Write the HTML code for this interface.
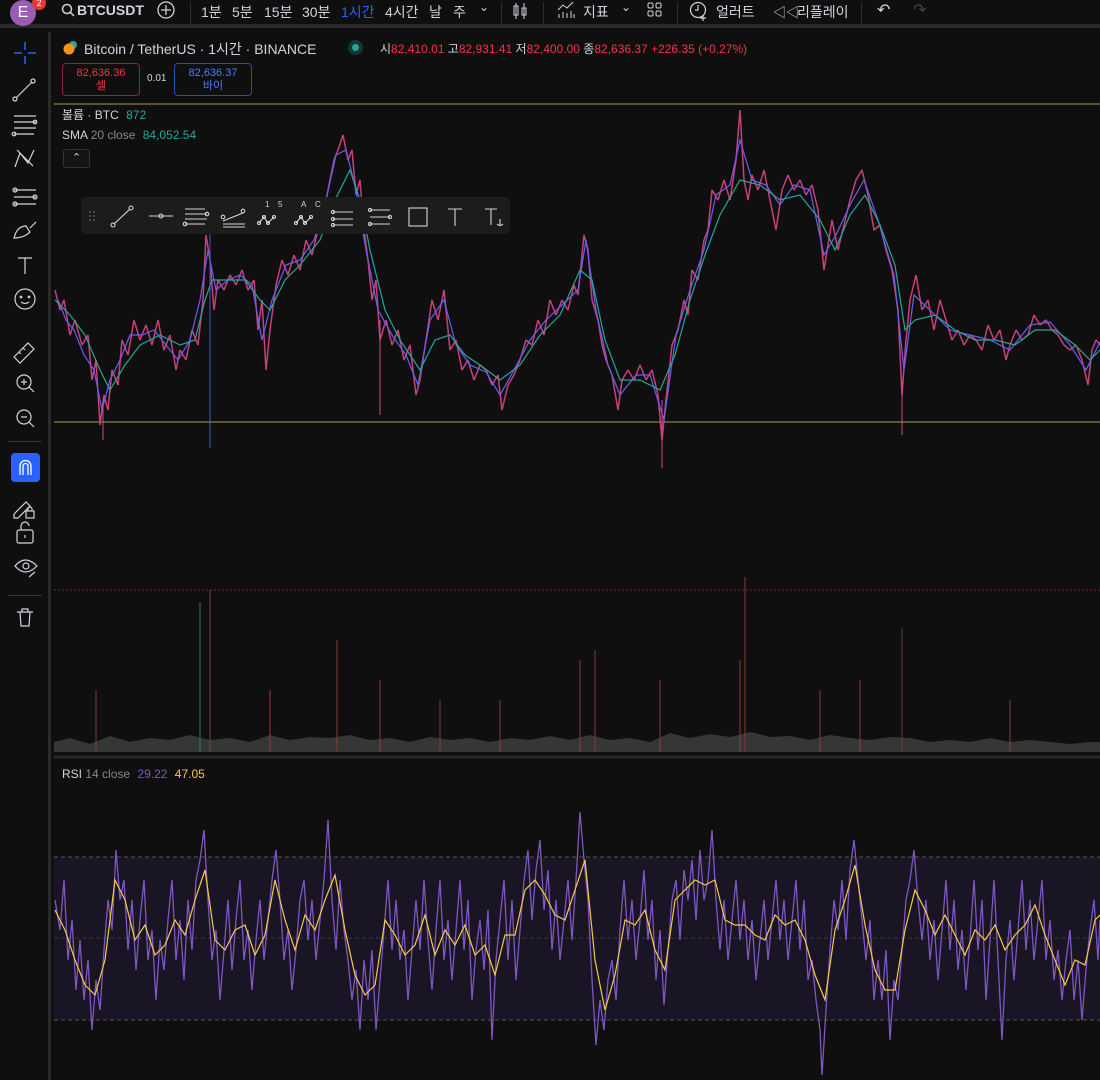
<!DOCTYPE html>
<html><head><meta charset="utf-8">
<style>
*{margin:0;padding:0;box-sizing:border-box}
body{width:1100px;height:1080px;background:#0f0f0f;overflow:hidden;font-family:"Liberation Sans","Noto Sans CJK KR",sans-serif;color:#d1d4dc;position:relative}
.top{position:absolute;left:0;top:0;width:1100px;height:28px;background:#0f0f0f;border-bottom:4px solid #2a2a2a}
.t{position:absolute;top:6px;font-size:14px;color:#d1d4dc;white-space:nowrap}
.sep{position:absolute;top:2px;width:1px;height:22px;background:#2f2f2f}
.side{position:absolute;left:0;top:32px;width:51px;height:1048px;background:#0f0f0f;border-right:3px solid #2a2a2a}
.hl{position:absolute;left:8px;width:34px;height:1px;background:#3a3a3a}
.lbl{position:absolute;font-size:12px;white-space:nowrap}
</style></head><body>
<div class="top">
  <div style="position:absolute;left:10px;top:0;width:26px;height:26px;border-radius:50%;background:#9b5cb4;color:#fff;font-size:16px;text-align:center;line-height:26px">E</div>
  <div style="position:absolute;left:32px;top:-4px;width:14px;height:14px;border-radius:50%;background:#e53935;color:#fff;font-size:9px;text-align:center;line-height:14px">2</div>
  <svg style="position:absolute;left:61px;top:3px" width="14" height="14"><circle cx="6" cy="6" r="4.5" stroke="#d1d4dc" stroke-width="1.5" fill="none"/><path d="M9.5 9.5L13 13" stroke="#d1d4dc" stroke-width="1.5"/></svg>
  <div class="t" style="left:77px;top:2px;font-weight:bold;font-size:14px">BTCUSDT</div>
  <svg style="position:absolute;left:156px;top:0" width="20" height="20"><circle cx="10" cy="10" r="8" stroke="#d1d4dc" stroke-width="1.3" fill="none"/><path d="M10 5v10M5 10h10" stroke="#d1d4dc" stroke-width="1.3"/></svg>
  <div class="sep" style="left:190px"></div>
  <div class="t" style="left:201px;top:2px">1분</div>
  <div class="t" style="left:232px;top:2px">5분</div>
  <div class="t" style="left:264px;top:2px">15분</div>
  <div class="t" style="left:302px;top:2px">30분</div>
  <div class="t" style="left:341px;top:2px;color:#2962ff">1시간</div>
  <div class="t" style="left:385px;top:2px">4시간</div>
  <div class="t" style="left:429px;top:2px">날</div>
  <div class="t" style="left:453px;top:2px">주</div>
  <div class="t" style="left:479px;top:0;font-size:12px">⌄</div>
  <div class="sep" style="left:501px"></div>
  <svg style="position:absolute;left:511px;top:1px" width="18" height="20"><path d="M5 2v16M13 2v16" stroke="#d1d4dc"/><rect x="3" y="5" width="4" height="9" fill="none" stroke="#d1d4dc"/><rect x="11" y="7" width="4" height="7" fill="none" stroke="#d1d4dc"/></svg>
  <div class="sep" style="left:543px"></div>
  <svg style="position:absolute;left:557px;top:0" width="20" height="20"><path d="M1 10l5-5 4 3 6-6M2 18v-4M6 18v-6M10 18v-5M14 18v-7M17 18v-4" stroke="#d1d4dc" fill="none"/></svg>
  <div class="t" style="left:583px;top:2px">지표</div>
  <div class="t" style="left:621px;top:0;font-size:12px">⌄</div>
  <svg style="position:absolute;left:646px;top:1px" width="18" height="18"><rect x="2" y="2" width="5" height="5" rx="1.5" fill="none" stroke="#d1d4dc"/><rect x="10" y="2" width="5" height="5" rx="1.5" fill="none" stroke="#d1d4dc"/><rect x="2" y="10" width="5" height="5" rx="1.5" fill="none" stroke="#d1d4dc"/><rect x="10" y="10" width="5" height="5" rx="1.5" fill="none" stroke="#d1d4dc"/></svg>
  <div class="sep" style="left:677px"></div>
  <svg style="position:absolute;left:688px;top:0" width="22" height="22"><circle cx="10" cy="10" r="7.5" fill="none" stroke="#d1d4dc" stroke-width="1.2"/><path d="M10 5v5h-3M15 15v6M12 18h6" stroke="#d1d4dc" stroke-width="1.2"/></svg>
  <div class="t" style="left:716px;top:2px">얼러트</div>
  <div class="t" style="left:773px;top:2px;font-size:13px">◁◁</div>
  <div class="t" style="left:797px;top:2px">리플레이</div>
  <div class="sep" style="left:861px"></div>
  <div class="t" style="left:877px;top:0;font-size:16px">↶</div>
  <div class="t" style="left:913px;top:0;font-size:16px;color:#444">↷</div>
</div>

<div class="side">
  <svg width="51" height="620" style="position:absolute;left:0;top:0" stroke="#d1d4dc" fill="none" stroke-width="1.2">
    <path d="M25 10v8M25 24v8M14 21h8M28 21h8" stroke="#2962ff" stroke-width="1.5"/>
    <path d="M16 66L32 50"/><circle cx="15" cy="67" r="2"/><circle cx="33" cy="49" r="2"/>
    <path d="M14 84h22M14 90h22M14 96h22M14 102h20"/><circle cx="14" cy="102" r="1.8"/><circle cx="35" cy="90" r="1.8"/>
    <path d="M15 135l5-14 8 10 6-13M17 118l16 16"/>
    <path d="M14 158h22M14 165h22M14 172h22"/><circle cx="15" cy="158" r="2"/><circle cx="35" cy="165" r="2"/><circle cx="15" cy="172" r="2"/>
    <path d="M14 206c2-8 6-12 12-12l4 6c-4 4-10 6-16 6zM30 196l6-6"/>
    <path d="M18 226h14M25 226v16"/>
    <circle cx="25" cy="267" r="10"/><circle cx="21" cy="265" r="0.8"/><circle cx="29" cy="265" r="0.8"/><path d="M21 270q4 3 8 0"/>
    <path d="M14 325l14-14 6 6-14 14zM19 320l2 2M23 316l2 2"/>
    <circle cx="24" cy="350" r="7"/><path d="M29 355l5 5M21 350h6M24 347v6"/>
    <circle cx="24" cy="385" r="7"/><path d="M29 390l5 5M21 385h6"/>
    <path d="M14 482l12-12 4 4-12 12h-4z"/><rect x="26" y="479" width="8" height="7"/><path d="M28 479v-2a2 2 0 0 1 4 0v2"/>
    <rect x="17" y="498" width="16" height="13" rx="2"/><path d="M21 498v-4a4 4 0 0 1 8 0"/><path d="M25 503v3"/>
    <path d="M15 534q10-12 22 0q-12 12-22 0z"/><circle cx="26" cy="534" r="3"/><path d="M29 545l6-5"/>
    <path d="M17 580h16M20 580l1 14h8l1-14M22 580v-3h6v3"/>
  </svg>
  <div class="hl" style="top:409px"></div>
  <div style="position:absolute;left:11px;top:421px;width:29px;height:29px;border-radius:4px;background:#2962ff"></div>
  <svg style="position:absolute;left:11px;top:421px" width="29" height="29"><path d="M9 22v-9a5.5 5.5 0 0 1 11 0v9M12 22v-9a2.5 2.5 0 0 1 5 0v9" stroke="#fff" fill="none" stroke-width="1.3"/></svg>
  <div class="hl" style="top:563px"></div>
</div>

<!-- legend -->
<svg style="position:absolute;left:62px;top:40px" width="18" height="16"><circle cx="11" cy="5" r="4" fill="#26a69a"/><circle cx="7" cy="9" r="5.5" fill="#f7931a"/></svg>
<div class="lbl" style="left:84px;top:39px;font-size:14px;color:#d1d4dc">Bitcoin / TetherUS · 1시간 · BINANCE</div>
<div style="position:absolute;left:348px;top:40px;width:15px;height:15px;border-radius:50%;background:#133a30"></div>
<div style="position:absolute;left:352px;top:44px;width:7px;height:7px;border-radius:50%;background:#26a69a"></div>
<div class="lbl" style="left:380px;top:40px;color:#d1d4dc">시<span style="color:#f23645">82,410.01</span> 고<span style="color:#f23645">82,931.41</span> 저<span style="color:#f23645">82,400.00</span> 종<span style="color:#f23645">82,636.37</span> <span style="color:#f23645">+226.35 (+0.27%)</span></div>
<div style="position:absolute;left:62px;top:63px;width:78px;height:33px;border:1px solid #8a2a2e;border-radius:4px;text-align:center;font-size:11px;color:#f23645;line-height:13px;padding-top:3px">82,636.36<br>셀</div>
<div class="lbl" style="left:147px;top:73px;font-size:10px">0.01</div>
<div style="position:absolute;left:174px;top:63px;width:78px;height:33px;border:1px solid #2450b0;border-radius:4px;text-align:center;font-size:11px;color:#4a7dff;line-height:13px;padding-top:3px">82,636.37<br>바이</div>

<div class="lbl" style="left:62px;top:106px">볼륨 · BTC <span style="color:#26a69a;margin-left:4px">872</span></div>
<div class="lbl" style="left:62px;top:128px">SMA <span style="color:#888">20 close</span> <span style="color:#26a69a;margin-left:4px">84,052.54</span></div>
<div style="position:absolute;left:63px;top:149px;width:27px;height:19px;border:1px solid #333;border-radius:3px;background:#141414;color:#d1d4dc;font-size:11px;text-align:center;line-height:17px">⌃</div>

<svg style="position:absolute;left:54px;top:32px" width="1046" height="1048">
  <g transform="translate(-54,-32)">
  <line x1="54" y1="104" x2="1100" y2="104" stroke="#a89a52" stroke-width="1"/>
  <line x1="54" y1="422" x2="1100" y2="422" stroke="#a89a52" stroke-width="1"/>
  <line x1="54" y1="590" x2="1100" y2="590" stroke="#7a2a2a" stroke-dasharray="2,2"/>
  <line x1="54" y1="757" x2="1100" y2="757" stroke="#2a2a2a" stroke-width="3"/>
  <!-- price -->
  <polyline fill="none" stroke="#c8407a" stroke-width="1.5" stroke-linejoin="bevel" points="55,290 60,310 64,300 70,335 75,320 82,345 88,335 92,380 96,360 100,425 104,395 108,410 112,370 118,385 122,340 128,355 134,320 140,340 146,325 152,345 158,320 164,350 170,335 176,370 180,350 186,360 192,330 198,345 203,300 206,235 210,260 214,310 218,280 224,290 230,275 236,285 242,270 248,290 254,280 258,330 262,300 266,370 270,330 276,285 282,260 288,275 294,255 300,270 306,240 312,255 318,230 324,210 330,180 334,160 338,150 343,135 348,160 352,150 356,195 360,180 364,230 368,260 372,300 376,280 380,340 386,320 392,345 398,330 404,360 410,345 416,395 420,380 426,340 432,300 438,320 444,290 450,350 456,340 462,370 468,360 474,380 480,365 486,370 492,385 498,375 502,410 508,385 514,375 520,360 526,340 532,345 538,320 544,335 550,300 556,315 562,300 568,310 574,285 578,295 584,235 588,250 592,300 598,320 602,345 606,360 612,375 618,410 622,380 628,370 634,380 640,365 646,380 652,370 658,395 662,440 666,400 672,345 678,330 684,300 688,315 692,270 698,280 704,240 708,230 712,190 718,200 724,180 730,200 736,160 740,110 744,180 748,200 752,175 758,190 764,170 770,200 776,230 782,190 788,175 794,190 800,180 806,195 812,185 818,210 824,270 828,245 832,220 838,250 844,225 850,200 856,180 862,170 868,195 874,230 880,225 886,250 892,270 898,310 902,395 906,340 910,300 916,275 922,310 928,300 934,330 940,300 946,320 952,340 958,330 964,345 970,335 976,340 982,350 988,325 994,340 1000,330 1006,360 1010,345 1016,330 1022,340 1028,335 1034,315 1040,325 1046,320 1052,330 1058,335 1064,345 1070,350 1076,345 1082,360 1088,385 1092,350 1096,340 1100,345"/>
  <polyline fill="none" stroke="#6a5ef0" stroke-width="1.2" points="58,300 66,320 74,330 84,355 94,370 102,410 110,380 120,360 130,335 142,335 154,330 166,345 178,360 190,340 200,300 208,250 216,290 228,280 240,275 252,285 262,340 272,300 286,265 300,260 314,240 326,200 336,155 346,150 356,190 366,250 378,310 392,335 406,355 418,385 430,320 444,300 456,345 470,365 486,372 500,395 514,370 530,340 546,320 562,305 578,290 586,240 596,310 608,365 620,395 636,375 650,375 664,420 676,335 690,290 704,250 716,195 730,185 740,140 752,180 766,185 780,205 794,185 810,190 824,255 836,235 850,205 864,180 878,220 894,275 904,370 914,295 930,310 950,330 970,335 990,340 1010,350 1030,325 1050,322 1070,345 1086,370 1100,342"/>
  <polyline fill="none" stroke="#26a69a" stroke-width="1.2" points="55,300 70,315 85,335 100,370 110,390 125,365 140,345 160,335 180,345 195,340 205,300 212,280 225,280 245,280 260,300 270,310 285,280 300,265 320,240 335,200 350,170 360,200 370,250 385,310 400,340 420,370 435,340 450,335 465,355 480,365 500,380 520,365 540,335 560,315 580,270 592,280 605,340 620,380 640,380 660,390 675,355 690,300 705,255 720,215 740,180 760,185 780,200 800,195 820,220 835,250 850,215 865,195 880,225 895,265 905,330 915,320 935,315 955,330 975,340 995,340 1015,345 1035,330 1055,330 1075,345 1090,360 1100,350"/>
  <g stroke="#c84a8a" stroke-width="1"><line x1="210" y1="230" x2="210" y2="448" stroke="#4a5ad0"/><line x1="662" y1="400" x2="662" y2="468"/><line x1="103" y1="400" x2="103" y2="440"/><line x1="902" y1="380" x2="902" y2="435"/><line x1="380" y1="320" x2="380" y2="415"/></g>
  <!-- volume -->
  <polygon fill="#3a3c38" opacity="0.9" points="54,752 54,742 70,738 90,744 110,736 130,742 150,738 170,740 190,735 210,740 230,738 250,742 270,735 290,740 310,737 330,738 350,735 370,740 390,738 410,742 430,737 450,740 470,738 490,742 510,738 530,740 550,736 570,740 590,735 610,740 630,738 650,742 670,733 690,738 710,734 730,737 750,732 770,737 790,736 810,740 830,735 850,738 870,740 890,737 910,738 930,742 950,740 970,742 990,738 1010,742 1030,740 1050,742 1070,744 1090,742 1100,742 1100,752"/>
  <g stroke="#8a3a3a" stroke-width="1">
    <line x1="210" y1="590" x2="210" y2="752"/><line x1="745" y1="577" x2="745" y2="752"/><line x1="200" y1="602" x2="200" y2="752" stroke="#2a7a6a"/><line x1="902" y1="628" x2="902" y2="752" stroke="#6a3a3a"/><line x1="337" y1="640" x2="337" y2="752"/><line x1="580" y1="660" x2="580" y2="752"/><line x1="660" y1="680" x2="660" y2="752"/><line x1="740" y1="660" x2="740" y2="752"/><line x1="860" y1="680" x2="860" y2="752"/><line x1="96" y1="690" x2="96" y2="752"/><line x1="380" y1="680" x2="380" y2="752"/><line x1="595" y1="650" x2="595" y2="752"/><line x1="500" y1="700" x2="500" y2="752"/><line x1="1010" y1="700" x2="1010" y2="752"/><line x1="270" y1="690" x2="270" y2="752"/><line x1="440" y1="700" x2="440" y2="752"/><line x1="820" y1="690" x2="820" y2="752"/>
  </g>
  <!-- RSI -->
  <rect x="54" y="857" width="1046" height="163" fill="#1a1524"/>
  <line x1="54" y1="857" x2="1100" y2="857" stroke="#555" stroke-dasharray="4,3"/>
  <line x1="54" y1="938" x2="1100" y2="938" stroke="#3a3a3a" stroke-dasharray="4,3"/>
  <line x1="54" y1="1020" x2="1100" y2="1020" stroke="#555" stroke-dasharray="4,3"/>
  <polyline fill="none" stroke="#7e57c2" stroke-width="1.3" stroke-linejoin="bevel" points="55,900 60,930 64,880 68,960 72,920 76,990 80,940 84,1000 88,960 92,1030 96,980 100,1010 104,950 108,900 112,930 116,850 120,900 124,880 128,950 132,900 136,970 140,920 144,880 148,960 152,930 156,1000 160,940 164,970 168,920 172,880 176,960 180,920 184,980 188,900 192,950 196,880 200,860 204,830 208,900 212,960 216,930 220,1000 224,950 228,900 232,970 236,920 240,880 244,960 248,930 252,990 256,940 260,900 264,960 268,920 272,880 276,850 280,900 284,960 288,930 292,990 296,950 300,900 304,880 308,940 312,900 316,960 320,920 324,880 328,820 332,900 336,950 340,880 344,930 348,960 352,1000 356,970 360,1030 364,960 368,1000 372,950 376,1030 380,980 384,930 388,880 392,950 396,900 400,960 404,930 408,1000 412,950 416,900 420,950 424,880 428,940 432,990 436,930 440,880 444,960 448,920 452,980 456,930 460,880 464,950 468,900 472,1000 476,950 480,920 484,970 488,910 492,1040 496,960 500,920 504,880 508,960 512,900 516,980 520,930 524,880 528,850 532,920 536,870 540,840 544,910 548,870 552,950 556,900 560,960 564,920 568,880 572,940 576,880 580,812 584,860 588,900 592,980 596,1045 600,1000 604,1030 608,980 612,960 616,1000 620,930 624,880 628,940 632,900 636,960 640,920 644,870 648,940 652,900 656,980 660,930 664,1005 668,950 672,900 676,880 680,940 684,870 688,900 692,860 696,920 700,850 704,900 708,880 712,830 716,900 720,950 724,900 728,960 732,920 736,880 740,940 744,900 748,960 752,920 756,980 760,940 764,900 768,960 772,920 776,880 780,940 784,900 788,960 792,920 796,880 800,950 804,900 808,980 812,960 816,1000 820,1030 822,1075 826,1010 830,950 834,900 838,930 842,880 846,940 850,870 854,840 858,880 862,920 866,960 870,920 874,1000 878,960 882,1000 886,950 890,1040 894,980 898,1000 902,950 906,900 910,880 914,850 918,900 922,940 926,900 930,960 934,920 938,980 942,930 946,880 950,950 954,900 958,970 962,930 966,990 970,940 974,880 978,950 982,900 986,1000 990,940 994,880 998,960 1002,1040 1006,960 1010,920 1014,980 1018,930 1022,880 1026,950 1030,900 1034,960 1038,920 1042,880 1046,960 1050,920 1054,980 1058,950 1062,1000 1066,960 1070,930 1074,1000 1078,960 1082,1020 1086,970 1090,930 1094,900 1098,960 1100,920"/>
  <polyline fill="none" stroke="#f7c948" stroke-width="1.2" points="55,910 65,930 75,960 85,985 95,995 105,960 115,880 125,900 135,940 145,925 155,955 165,945 175,920 185,935 195,900 205,870 215,940 225,950 235,930 245,925 255,955 265,935 275,880 285,920 295,950 305,915 315,930 325,900 335,875 345,930 355,975 365,995 375,985 385,920 395,935 405,955 415,945 425,915 435,955 445,930 455,945 465,925 475,955 485,945 495,975 505,935 515,935 525,890 535,880 545,895 555,915 565,920 575,890 585,860 595,960 605,1010 615,975 625,920 635,925 645,910 655,950 665,970 675,900 685,890 695,880 705,885 715,880 725,920 735,925 745,925 755,935 765,940 775,915 785,925 795,920 805,940 815,975 825,1000 835,930 845,900 855,865 865,925 875,970 885,990 895,990 905,930 915,890 925,910 935,935 945,915 955,935 965,955 975,930 985,940 995,925 1005,950 1015,935 1025,925 1035,905 1045,935 1055,960 1065,985 1075,960 1085,965 1095,920 1100,915"/>
  </g>
</svg>

<!-- floating drawing toolbar -->
<div style="position:absolute;left:81px;top:197px;width:429px;height:37px;background:#1c1c1c;border-radius:5px"></div>
<svg style="position:absolute;left:81px;top:197px" width="429" height="37" stroke="#d1d4dc" fill="none" stroke-width="1.1">
  <g fill="#555" stroke="none"><circle cx="9" cy="15" r="1"/><circle cx="13" cy="15" r="1"/><circle cx="9" cy="19" r="1"/><circle cx="13" cy="19" r="1"/><circle cx="9" cy="23" r="1"/><circle cx="13" cy="23" r="1"/></g>
  <path d="M33 27L49 12"/><circle cx="32" cy="28" r="2"/><circle cx="50" cy="11" r="2"/>
  <path d="M68 19h24"/><circle cx="80" cy="19" r="2"/>
  <path d="M104 12h20M104 17h22M104 22h22M104 27h20"/><circle cx="126" cy="17" r="1.8"/><circle cx="104" cy="27" r="1.8"/>
  <path d="M142 24l20-8M142 27h22M142 30h22"/><circle cx="142" cy="20" r="1.8"/><circle cx="162" cy="14" r="1.8"/>
  <path d="M178 26l5-6 4 6 6-6" /><circle cx="178" cy="26" r="1.5"/><circle cx="183" cy="20" r="1.5"/><circle cx="187" cy="26" r="1.5"/><circle cx="193" cy="20" r="1.5"/>
  <path d="M215 26l5-6 4 6 6-6" /><circle cx="215" cy="26" r="1.5"/><circle cx="220" cy="20" r="1.5"/><circle cx="224" cy="26" r="1.5"/><circle cx="230" cy="20" r="1.5"/>
  <path d="M252 15h20M252 22h20M252 28h20"/><circle cx="252" cy="15" r="1.6"/><circle cx="252" cy="22" r="1.6"/><circle cx="252" cy="28" r="1.6"/>
  <path d="M289 13h20M289 20h20M289 27h20"/><circle cx="289" cy="13" r="1.6"/><circle cx="309" cy="20" r="1.6"/><circle cx="289" cy="27" r="1.6"/>
  <rect x="328" y="11" width="18" height="18"/>
  <path d="M367 12h14M374 12v17"/>
  <path d="M404 12h12M410 12v16M419 22v7M416 27q3 3 6 0"/>
</svg>
<div style="position:absolute;left:81px;top:197px;font-size:8px;color:#d1d4dc">
  <span style="position:absolute;left:184px;top:3px">1</span><span style="position:absolute;left:197px;top:3px">5</span>
  <span style="position:absolute;left:220px;top:3px">A</span><span style="position:absolute;left:234px;top:3px">C</span>
</div>

<div class="lbl" style="left:62px;top:767px">RSI <span style="color:#888">14 close</span> <span style="color:#7e57c2;margin-left:4px">29.22</span> <span style="color:#f7c948;margin-left:4px">47.05</span></div>
</body></html>
